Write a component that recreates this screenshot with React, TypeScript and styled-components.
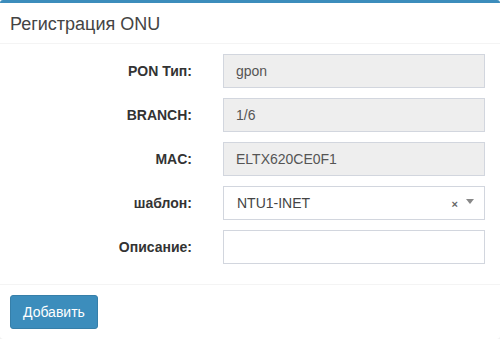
import React from 'react';
import styled, { createGlobalStyle } from 'styled-components';

const GlobalStyle = createGlobalStyle`
  html, body {
    margin: 0;
    padding: 0;
    background: #ffffff;
  }
  body {
    font-family: "Liberation Sans", Arial, sans-serif;
    font-size: 14px;
    color: #333;
  }
  * {
    box-sizing: border-box;
  }
`;

type Field = {
  label: string;
  value?: string;
  kind: 'readonly' | 'select' | 'text';
};

const fields: Field[] = [
  { label: 'PON Тип:', value: 'gpon', kind: 'readonly' },
  { label: 'BRANCH:', value: '1/6', kind: 'readonly' },
  { label: 'MAC:', value: 'ELTX620CE0F1', kind: 'readonly' },
  { label: 'шаблон:', value: 'NTU1-INET', kind: 'select' },
  { label: 'Описание:', kind: 'text' },
];

const App: React.FC = () => {
  return (
    <>
      <GlobalStyle />
      <Box>
        <BoxHeader>
          <BoxTitle>Регистрация ONU</BoxTitle>
        </BoxHeader>
        <BoxBody>
          <FormGrid>
            {fields.map((f) => (
              <React.Fragment key={f.label}>
                <Label>{f.label}</Label>
                {f.kind === 'select' ? (
                  <Select>
                    <SelectValue>{f.value}</SelectValue>
                    <Clear>×</Clear>
                    <Arrow />
                  </Select>
                ) : (
                  <Input $readOnly={f.kind === 'readonly'}>{f.value}</Input>
                )}
              </React.Fragment>
            ))}
          </FormGrid>
        </BoxBody>
        <BoxFooter>
          <Button>Добавить</Button>
        </BoxFooter>
      </Box>
    </>
  );
};

export default App;

const Box = styled.div`
  width: 500px;
  background: #fff;
  border-top: 3px solid #3c8dbc;
  border-radius: 3px;
  box-shadow: 0 1px 1px rgba(0, 0, 0, 0.1);
`;
const BoxHeader = styled.div`
  height: 41px;
  padding: 12px 10px 8px;
  border-bottom: 1px solid #f4f4f4;
  display: flex;
  align-items: center;
`;
const BoxTitle = styled.h3`
  margin: 0;
  font-size: 18px;
  font-weight: normal;
  line-height: 1.1;
  color: #444;
`;
const BoxBody = styled.div`
  padding: 10px 15px 20px 10px;
`;
const FormGrid = styled.div`
  display: grid;
  grid-template-columns: 182px 262px;
  grid-auto-rows: 34px;
  column-gap: 31px;
  row-gap: 10px;
  align-items: center;
`;
const Label = styled.label`
  text-align: right;
  font-weight: bold;
  color: #333;
`;
const Input = styled.div<{ $readOnly: boolean }>`
  height: 34px;
  padding: 6px 12px;
  line-height: 20px;
  border: 1px solid #d2d6de;
  background: ${(p) => (p.$readOnly ? '#eeeeee' : '#ffffff')};
  color: #555;
`;
const Select = styled.div`
  height: 34px;
  padding: 6px 10px 6px 13px;
  border: 1px solid #d2d6de;
  background: #fff;
  display: flex;
  align-items: center;
`;
const SelectValue = styled.span`
  flex: 1;
  color: #444;
  line-height: 20px;
`;
const Clear = styled.span`
  color: #666;
  font-weight: bold;
  font-size: 11px;
  margin-right: 8px;
  margin-top: 2px;
`;
const Arrow = styled.span`
  width: 0;
  height: 0;
  border-left: 4px solid transparent;
  border-right: 4px solid transparent;
  border-top: 5px solid #888;
  margin-top: -3px;
`;
const BoxFooter = styled.div`
  padding: 10px;
  border-top: 1px solid #f4f4f4;
`;
const Button = styled.button`
  font-family: "Liberation Sans", Arial, sans-serif;
  font-size: 14px;
  line-height: 20px;
  padding: 6px 12px;
  color: #fff;
  background: #3c8dbc;
  border: 1px solid #367fa9;
  border-radius: 3px;
  cursor: pointer;
`;
